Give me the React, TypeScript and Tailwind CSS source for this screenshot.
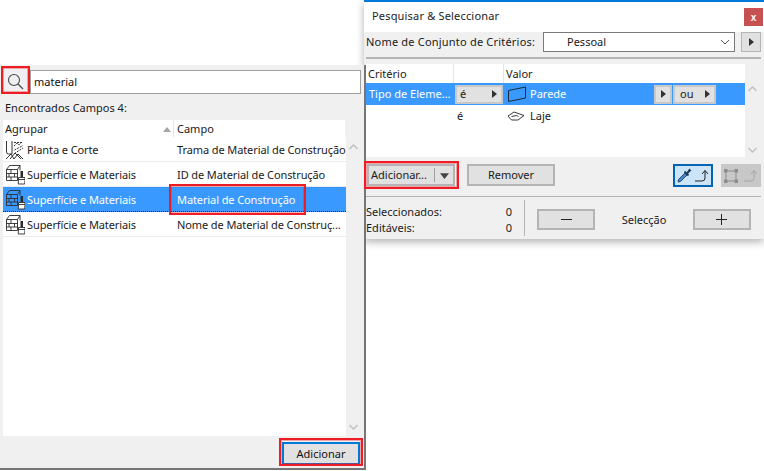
import React from "react";

const font = { fontFamily: '"Noto Sans", sans-serif' };

function Tri({ dir = "right", color = "#3c3c3c", size = 8 }: { dir?: "right" | "down" | "up"; color?: string; size?: number }) {
  const pts = dir === "right" ? "2,0 7,4 2,8" : dir === "down" ? "0,2 8,2 4,7" : "0,7 8,7 4,2";
  return (
    <svg width={size} height={size} viewBox="0 0 8 8" className="shrink-0">
      <polygon points={pts} fill={color} />
    </svg>
  );
}

function Chevron({ up, className }: { up?: boolean; className?: string }) {
  return (
    <svg width="9" height="6" viewBox="0 0 9 6" className={className}>
      <path d={up ? "M.5 5 4.5 1l4 4" : "M.5 1l4 4 4-4"} fill="none" stroke="#c4c4c4" strokeWidth="1.6" />
    </svg>
  );
}

function HatchIcon() {
  return (
    <svg width="20" height="20" viewBox="0 0 20 20" className="shrink-0">
      <g fill="none" stroke="#333" strokeWidth="1">
        <path d="M1.500 1v11q0 2 2 2h3.500V1" />
        <path d="M9 2.500h8M9 6l3-3 2 2 3-3.500" strokeDasharray="2 1" />
        <path d="M9.500 10 18 5.500M9.500 13.500 18 8" strokeDasharray="2 1" />
        <path d="M1 19l5-5 3 5 4-5 5 5M5 19l5-6 6 6" />
      </g>
    </svg>
  );
}

function MaterialIcon() {
  return (
    <svg width="20" height="21" viewBox="0 0 20 21" className="shrink-0">
      <g fill="none" stroke="#2b2b2b" strokeWidth="0.9">
        <path d="M1.500 5.500h11v11h-11zM1.500 5.500 4.500 1.500h10.500v5M12.500 5.500l2.500-4" />
        <path d="M1.500 9.500h11M1.500 13h11M6 5.500v4M9.500 9.500V13M4 9.500V13M6 13v3.500" />
      </g>
      <path d="M15.500 7h2.500v6h-2.500z" fill="#2b2b2b" />
      <path d="M13.500 13.500h6.500v2.500l-.3 4h-6.500l.3-4z" fill="#fff" stroke="#2b2b2b" strokeWidth="0.9" />
      <path d="M13.500 15.500h6.500" stroke="#2b2b2b" strokeWidth="0.9" />
    </svg>
  );
}

function Row({ icon, group, field, selected }: { icon: React.ReactNode; group: string; field: string; selected?: boolean }) {
  return (
    <div
      className={
        "flex h-[25px] items-center border-y tracking-[-0.1px] " +
        (selected
          ? "border-dotted border-t-[#a8743a] border-b-[#14233a] bg-[#3a99fe] text-white"
          : "border-t-transparent border-b-[#ececec] text-[#1a1a1a]")
      }
    >
      <div className="flex w-[171px] shrink-0 items-center gap-[2px] pl-[2px]">
        {icon}
        <span className="whitespace-nowrap">{group}</span>
      </div>
      <span className="whitespace-nowrap pl-[3px]">{field}</span>
    </div>
  );
}

function GrayBtn({ className, children }: { className: string; children: React.ReactNode }) {
  return (
    <div className={"flex items-center justify-center border-2 border-[#b4b4b4] bg-[#e1e1e1] text-[#1a1a1a] " + className}>
      {children}
    </div>
  );
}

function MiniBtn({ w, children }: { w: string; children?: React.ReactNode }) {
  return (
    <div className={"flex h-[19px] items-center justify-between border-2 border-[#c8c8c8] bg-[#e1e1e1] px-[3px] text-[#1a1a1a] " + w}>
      {children}
    </div>
  );
}

function LeftPanel() {
  return (
    <div className="absolute left-0 top-[65px] flex h-[405px] w-[366px] flex-col border-b-2 border-r-2 border-[#767676] bg-[#f0f0f0]">
      <div className="flex h-[31px] shrink-0 items-start pt-[5px]">
        <div className="ml-[3px] flex h-[24px] w-[24px] items-center justify-center pb-[2px]">
          <svg width="17" height="17" viewBox="0 0 17 17">
            <circle cx="7" cy="7" r="5.500" fill="none" stroke="#4a4a4a" strokeWidth="1.100" />
            <path d="M11 11l5 5" stroke="#4a4a4a" strokeWidth="1.200" />
          </svg>
        </div>
        <div className="ml-[3px] flex h-[24px] w-[331px] items-center border border-[#a0a0a0] bg-white pl-[3px] text-[#111]">material</div>
      </div>
      <div className="flex h-[24px] shrink-0 items-center pl-[5px] text-[#1a1a1a]">Encontrados Campos 4:</div>
      <div className="flex min-h-0 flex-1 pl-[3px]">
        <div className="flex w-[343px] flex-col">
          <div className="flex h-[17px] w-[342px] shrink-0 bg-white text-[#1a1a1a]">
            <div className="flex w-[171px] items-center justify-between border-r border-[#e5e5e5] pl-[2px] pr-[2px]">
              <span>Agrupar</span>
              <Tri dir="up" color="#a6a6a6" />
            </div>
            <span className="pl-[3px] leading-[17px]">Campo</span>
          </div>
          <div className="h-[299px] bg-white">
            <Row icon={<HatchIcon />} group="Planta e Corte" field="Trama de Material de Construção" />
            <Row icon={<MaterialIcon />} group="Superfície e Materiais" field="ID de Material de Construção" />
            <Row icon={<MaterialIcon />} group="Superfície e Materiais" field="Material de Construção" selected />
            <Row icon={<MaterialIcon />} group="Superfície e Materiais" field="Nome de Material de Construç..." />
          </div>
        </div>
        <div className="flex h-[316px] w-[15px] flex-col items-center justify-between pb-[6px] pt-[24px]">
          <Chevron up />
          <Chevron />
        </div>
      </div>
      <div className="flex h-[29px] shrink-0 justify-end pr-[4px] pt-[3px]">
        <div className="flex h-[23px] w-[78px] items-center justify-center border-2 border-[#0078d7] bg-[#e1e1e1] text-[#111]">Adicionar</div>
      </div>
    </div>
  );
}

function RightWindow() {
  return (
    <div className="absolute left-[364px] top-0 flex h-[239px] w-[400px] flex-col border-t-2 border-[#0078d7] bg-[#f0f0f0] shadow-[0_3px_8px_rgba(0,0,0,0.3)]">
      <div className="flex h-[30px] shrink-0 items-start justify-between bg-white">
        <span className="ml-[8px] mt-[6px] tracking-[0.18px] text-[#222]">Pesquisar &amp; Seleccionar</span>
        <div className="mr-[1px] mt-[6px] flex h-[18px] w-[19px] items-center justify-center bg-[#c75050] pb-[1px] text-[10px] font-semibold leading-none text-white">x</div>
      </div>
      <div className="flex h-[25px] shrink-0 items-start">
        <span className="ml-[2px] w-[177px] whitespace-nowrap leading-[20px] tracking-[0.2px] text-[#1a1a1a]">Nome de Conjunto de Critérios:</span>
        <div className="flex h-[20px] w-[192px] items-center justify-between border border-[#7a7a7a] bg-white pl-[23px] pr-[4px] text-[#1a1a1a]">
          <span>Pessoal</span>
          <svg width="10" height="6" viewBox="0 0 10 6"><path d="M1 1l4 4 4-4" fill="none" stroke="#555" strokeWidth="1" /></svg>
        </div>
        <div className="ml-[6px] flex h-[20px] w-[20px] items-center justify-center border border-[#b4b4b4] bg-[#e1e1e1]">
          <Tri color="#333" />
        </div>
      </div>
      <div className="ml-[2px] mr-[3px] h-[2px] shrink-0 bg-[#b4b4b4]" />
      <div className="mt-[5px] flex h-[93px] shrink-0 pl-[2px]">
        <div className="flex w-[379px] flex-col bg-white">
          <div className="flex h-[19px] shrink-0 text-[#1a1a1a]">
            <span className="w-[88px] border-r border-[#e5e5e5] pl-[2px] leading-[19px]">Critério</span>
            <span className="w-[50px] border-r border-[#e5e5e5]" />
            <span className="pl-[2px] leading-[19px]">Valor</span>
          </div>
          <div className="flex h-[22px] shrink-0 items-center bg-[#3a99fe] text-white">
            <span className="w-[89px] whitespace-nowrap pl-[3px]">Tipo de Eleme...</span>
            <MiniBtn w="w-[48px]"><span>é</span><Tri color="#333" /></MiniBtn>
            <svg width="20" height="17" viewBox="0 0 20 17" className="ml-[4px] shrink-0">
              <path d="M1.500 4.500 18.500 1v11L1.500 15.500z" fill="#3a99fe" stroke="#1a2a3a" strokeWidth="1" />
            </svg>
            <span className="ml-[3px] w-[124px]">Parede</span>
            <MiniBtn w="w-[18px] !px-0 justify-center"><Tri color="#333" /></MiniBtn>
            <div className="w-[1px]" />
            <MiniBtn w="w-[43px]"><span className="pl-[2px]">ou</span><Tri color="#333" /></MiniBtn>
          </div>
          <div className="flex h-[22px] shrink-0 items-center text-[#1a1a1a]">
            <span className="w-[91px] pl-[3px]" />
            <span className="w-[50px]">é</span>
            <svg width="18" height="10" viewBox="0 0 18 10" className="shrink-0">
              <path d="M1 5 7 1l10 3.500-6 4.500H4.500zM4.500 5.500l5-1 2 1" fill="#fff" stroke="#222" strokeWidth="0.9" />
            </svg>
            <span className="ml-[5px]">Laje</span>
          </div>
        </div>
        <div className="flex w-[15px] flex-col items-center justify-between pb-[4px] pt-[22px]">
          <Chevron up />
          <Chevron />
        </div>
      </div>
      <div className="flex h-[39px] shrink-0 items-start pt-[7px]">
        <div className="ml-[3px] flex h-[22px] w-[88px] items-center border-2 border-[#b4b4b4] bg-[#e1e1e1] pl-[2px] text-[#1a1a1a]">
          <span className="w-[63px] whitespace-nowrap">Adicionar...</span>
          <div className="h-[14px] w-px bg-[#a0a0a0]" />
          <div className="flex flex-1 justify-center"><Tri dir="down" color="#444" size={9} /></div>
        </div>
        <GrayBtn className="ml-[12px] h-[22px] w-[88px]">Remover</GrayBtn>
        <div className="ml-[118px] flex h-[23px] w-[40px] items-center justify-center gap-[3px] border-2 border-[#0064b4] bg-[#cce4f7]">
          <svg width="15" height="15" viewBox="0 0 15 15">
            <path d="M1 14l.5-2.500L8 5l2 2-6.500 6.500z" fill="#4a86c8" stroke="#1d3d60" strokeWidth="0.9" />
            <path d="M7.500 3.500l4 4" stroke="#1d3d60" strokeWidth="1.800" />
            <path d="M9.500 5.500 12.500 1.500l1 1-3.500 3.500z" fill="#1d3d60" stroke="#1d3d60" strokeWidth="1.200" />
          </svg>
          <svg width="15" height="13" viewBox="0 0 15 13">
            <path d="M0 12h7q3 0 3-3V1.500M7 5l3-3.500L13 5" fill="none" stroke="#222" strokeWidth="1" />
          </svg>
        </div>
        <div className="ml-[8px] flex h-[23px] w-[40px] items-center justify-center gap-[6px] bg-[#c8c8c8]">
          <svg width="14" height="14" viewBox="0 0 14 14">
            <path d="M2 2h10v10H2z" fill="none" stroke="#8c8c8c" strokeWidth="1" />
            <path d="M0 0h3.500v3.500H0zM10.500 0H14v3.500h-3.500zM0 10.500h3.500V14H0zM10.500 10.500H14V14h-3.500z" fill="#8c8c8c" />
          </svg>
          <svg width="15" height="13" viewBox="0 0 15 13">
            <path d="M0 12h7q3 0 3-3V1.500M7 5l3-3.500L13 5" fill="none" stroke="#a4a4a4" strokeWidth="1" />
          </svg>
        </div>
      </div>
      <div className="ml-[2px] mr-[3px] h-[1px] shrink-0 bg-[#b4b4b4]" />
      <div className="flex flex-1 text-[#1a1a1a]">
        <div className="flex w-[160px] flex-col justify-center pl-[2px] pr-[12px] pt-[4px] leading-[16px]">
          <div className="flex justify-between"><span>Seleccionados:</span><span>0</span></div>
          <div className="flex justify-between"><span>Editáveis:</span><span>0</span></div>
        </div>
        <div className="my-[3px] w-px bg-[#b4b4b4]" />
        <div className="flex flex-1 items-center justify-between pl-[12px] pr-[13px] pt-[2px]">
          <GrayBtn className="h-[21px] w-[58px]"><span className="block h-px w-[11px] bg-[#222]" /></GrayBtn>
          <span className="pt-[1px]">Selecção</span>
          <GrayBtn className="h-[21px] w-[58px]">
            <svg width="11" height="11" viewBox="0 0 11 11"><path d="M5.500 0v11M0 5.500h11" stroke="#222" strokeWidth="1" /></svg>
          </GrayBtn>
        </div>
      </div>
    </div>
  );
}

function Box({ className }: { className: string }) {
  return <div className={"absolute border-2 border-[#ee1c25] shadow-[inset_0_0_0_1px_rgba(238,28,37,0.35)] " + className} />;
}

export default function App() {
  return (
    <div className="relative h-[471px] w-[764px] overflow-hidden bg-white text-[11px] leading-[16px]" style={font}>
      <RightWindow />
      <LeftPanel />
      <Box className="left-[1px] top-[66px] h-[28px] w-[29px]" />
      <Box className="left-[169px] top-[184px] h-[31px] w-[137px]" />
      <Box className="left-[364px] top-[161px] h-[28px] w-[95px]" />
      <Box className="left-[279px] top-[438px] h-[28px] w-[84px]" />
    </div>
  );
}
